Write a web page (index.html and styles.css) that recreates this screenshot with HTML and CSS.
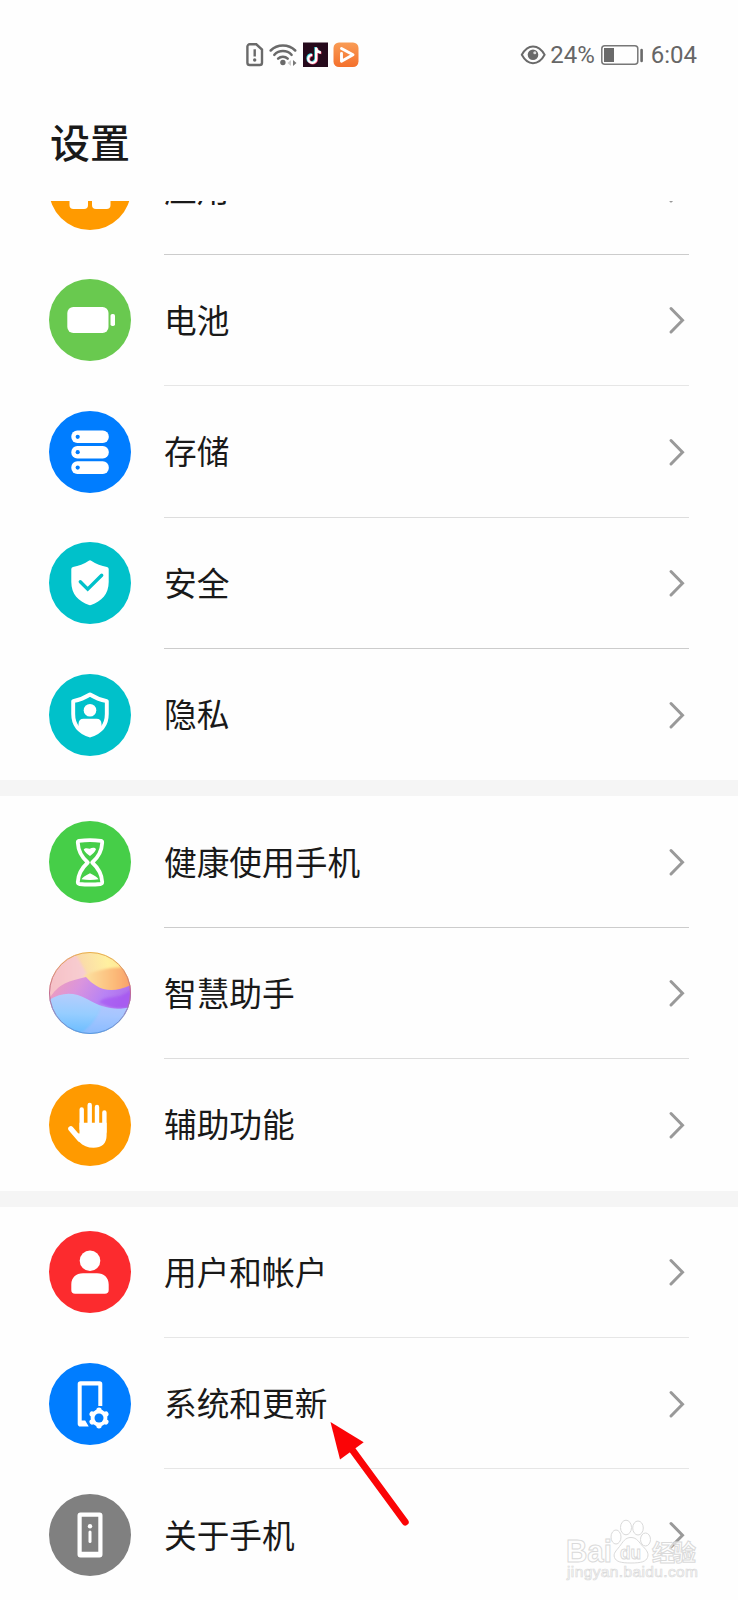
FILE: index.html
```html
<!DOCTYPE html>
<html lang="zh-CN">
<head>
<meta charset="utf-8">
<title>设置</title>
<link rel="stylesheet" href="styles.css">
</head>
<body>
<svg class="defs" width="0" height="0">
  <symbol id="chev" viewBox="0 0 18 30"><path d="M4 3.500 15.500 15.200 4 27" fill="none" stroke="#999" stroke-width="3" stroke-linecap="round"/></symbol>
</svg>
<div class="screen">
  <header class="status">
    <div class="status-left">
      <svg width="20" height="26" viewBox="0 0 20 26"><path d="M4.7 2.300h6.600l5.700 5.200v13.200a2.300 2.300 0 0 1-2.300 2.300H4.700a2.300 2.300 0 0 1-2.300-2.300V4.600a2.300 2.300 0 0 1 2.300-2.300z" fill="none" stroke="#6a6a6a" stroke-width="2.400"/><path d="M9.700 7.300v7.200" stroke="#6a6a6a" stroke-width="2.400"/><circle cx="9.700" cy="18" r="1.700" fill="#6a6a6a"/></svg>
      <svg width="30" height="26" viewBox="0 0 30 26"><g fill="none" stroke="#6a6a6a" stroke-width="2.500" stroke-linecap="round"><path d="M1.700 8.500a17.500 17.500 0 0 1 24.500 0"/><path d="M5.300 12.800a12 12 0 0 1 17.300 0"/><path d="M9.100 16.700a6.700 6.700 0 0 1 9.600 0"/></g><circle cx="13.900" cy="20.500" r="2.700" fill="#6a6a6a"/><path d="M22 18v6l-3.500-3z" fill="#ccc"/><path d="M24 18v6l3.500-3z" fill="#777"/></svg>
      <svg width="25" height="26" viewBox="0 0 25 26"><path fill="#260a1c" d="M0 .500h25v24.500H0z"/><g fill="none" stroke-width="2.600"><path d="M12.600 5v11a4 4 0 1 1-4-3.700M12.600 5.500c.5 3 2 4.300 4.700 4.500" stroke="#35d8dd"/><path d="M13.800 6v11a4 4 0 1 1-4-3.700M13.800 6.500c.5 3 2 4.300 4.700 4.500" stroke="#e8416b"/><path d="M13.200 5.500v11a4 4 0 1 1-4-3.700M13.200 6c.5 3 2 4.300 4.700 4.500" stroke="#fff" stroke-width="2.300"/></g></svg>
      <svg width="26" height="26" viewBox="0 0 26 26"><defs><linearGradient id="og" x2="0" y2="1"><stop stop-color="#f99c55"/><stop offset="1" stop-color="#f4702c"/></linearGradient></defs><rect x=".5" y=".5" width="25" height="24.500" rx="5.500" fill="url(#og)"/><path d="M8.500 6.500 20 12.700 8.500 19.200V11.500" fill="none" stroke="#fff" stroke-width="2.900" stroke-linejoin="round" stroke-linecap="round"/></svg>
    </div>
    <div class="status-right">
      <svg width="26" height="22" viewBox="0 0 26 22"><path d="M1.800 10.800C4.900 5 8.800 2.400 13 2.400S21.500 5 24.600 10.800C21.500 16.600 17.500 19.200 13 19.200S4.900 16.600 1.800 10.800z" fill="none" stroke="#6a6a6a" stroke-width="2"/><circle cx="13" cy="10.800" r="5.300" fill="#6a6a6a"/><circle cx="14.800" cy="8.700" r="1.500" fill="#ddd"/></svg>
      <span class="pct">24%</span>
      <svg width="43" height="20" viewBox="0 0 43 20"><rect x=".8" y=".8" width="36" height="18.400" rx="3" fill="none" stroke="#777" stroke-width="1.500"/><path fill="#6a6a6a" d="M3 3h10v14H3z"/><path d="M40.600 5v11" stroke="#6a6a6a" stroke-width="2.600" stroke-linecap="round"/></svg>
      <span class="time">6:04</span>
    </div>
  </header>
  <h1 class="title">设置</h1>
  <main class="viewport">
    <section class="group first">
      <div class="row"><svg class="icon" viewBox="0 0 82 82"><circle cx="41" cy="41" r="41" fill="#ff9a00"/><g fill="#fff"><rect x="20" y="20" width="19" height="19" rx="4"/><rect x="43" y="20" width="19" height="19" rx="4"/><rect x="20.500" y="43" width="18.500" height="18" rx="4"/><rect x="43" y="43" width="18.500" height="18" rx="4"/></g></svg><div class="cell line-dark"><span>应用</span><svg class="chev"><use href="#chev"/></svg></div></div>
      <div class="row"><svg class="icon" viewBox="0 0 82 82"><circle cx="41" cy="41" r="41" fill="#69c94f"/><rect x="18.300" y="28" width="41.200" height="26" rx="6" fill="#fff"/><rect x="61.500" y="35" width="4.500" height="12" rx="1.800" fill="#fff"/></svg><div class="cell"><span>电池</span><svg class="chev"><use href="#chev"/></svg></div></div>
      <div class="row"><svg class="icon" viewBox="0 0 82 82"><circle cx="41" cy="41" r="41" fill="#007dff"/><g fill="#fff"><rect x="22.300" y="19.500" width="37.500" height="12.600" rx="6"/><rect x="22.300" y="34.900" width="37.500" height="12.600" rx="6"/><rect x="22.300" y="50.300" width="37.500" height="12.600" rx="6"/></g><g fill="#007dff"><circle cx="28.700" cy="25.800" r="2.100"/><circle cx="28.700" cy="41.200" r="2.100"/><circle cx="28.700" cy="56.600" r="2.100"/></g></svg><div class="cell line-mid"><span>存储</span><svg class="chev"><use href="#chev"/></svg></div></div>
      <div class="row"><svg class="icon" viewBox="0 0 82 82"><circle cx="41" cy="41" r="41" fill="#00c1ca"/><path d="M39.800 18.700q1.200-.7 2.400 0C47 21.800 52.500 24 58 25q1.700.4 1.700 2V40c0 12-7.200 19.500-17.700 23q-1 .3-2 0C29.500 59.500 22.300 52 22.300 40V27q0-1.600 1.700-2C29.500 24 35 21.800 39.800 18.700z" fill="#fff"/><path d="m31.300 39.800 7.400 7.400 14-14" fill="none" stroke="#00c1ca" stroke-width="3.400" stroke-linecap="round"/></svg><div class="cell line-dark"><span>安全</span><svg class="chev"><use href="#chev"/></svg></div></div>
      <div class="row"><svg class="icon" viewBox="0 0 82 82"><circle cx="41" cy="41" r="41" fill="#00c1ca"/><path d="M41 20.500c5 3.200 10 5.200 16.800 6.600V40c0 11-6 18-16.800 21.500C30.200 58 24.200 51 24.200 40V27.100C31 25.700 36 23.700 41 20.500z" fill="none" stroke="#fff" stroke-width="3.900" stroke-linejoin="round"/><circle cx="41" cy="36.300" r="6.300" fill="#fff"/><path d="M29.500 54v-4c0-3.500 2-5.300 5-5.300h13c3 0 5 1.800 5 5.300v4c-2.500 4-7 6.500-11.500 8-4.500-1.500-9-4-11.500-8z" fill="#fff"/></svg><div class="cell last"><span>隐私</span><svg class="chev"><use href="#chev"/></svg></div></div>
    </section>
    <section class="group">
      <div class="row"><svg class="icon" viewBox="0 0 82 82"><circle cx="41" cy="41" r="41" fill="#46ce48"/><path d="M30 19.900Q41 18.500 52 19.900q1.300.3 1.200 1.700C52.800 30 49 36.500 43.200 41.500c6 5.500 9.600 11 10 19.500.1 1.400-.4 1.800-1.700 2-7 .7-14 .7-21 0-1.300-.2-1.800-.6-1.700-2C29.200 52.500 32.800 47 38.800 41.500 33 36.500 29.200 30 28.800 21.600q-.1-1.400 1.200-1.700z" fill="none" stroke="#fff" stroke-width="3.800" stroke-linejoin="round"/><path d="M34.700 28.500c1-1.500 3.500-1.500 6-.7 2.500-1.400 5.300-1.500 6.300.5-1 2.800-3.500 5-6 6.600-2.800-1.700-5.300-3.800-6.300-6.400zM32.500 58.300q1.200-2.300 8.500-6 7.300 3.700 8.500 6-8.500 1.200-17 0z" fill="#fff"/></svg><div class="cell line-dark"><span>健康使用手机</span><svg class="chev"><use href="#chev"/></svg></div></div>
      <div class="row"><svg class="icon" viewBox="0 0 82 82">
        <defs>
          <clipPath id="orb"><circle cx="41" cy="41" r="41"/></clipPath>
          <linearGradient id="base" x1="0" x2="1" y1=".2" y2="0"><stop stop-color="#f6c0b0"/><stop offset=".45" stop-color="#fbdfa8"/><stop offset=".7" stop-color="#fff0a0"/><stop offset="1" stop-color="#ffe28a"/></linearGradient>
          <linearGradient id="pinkg" x2="1"><stop stop-color="#f6bfc6"/><stop offset="1" stop-color="#f8cfd2"/></linearGradient>
          <linearGradient id="orangeg" x2="1"><stop stop-color="#fde2a0"/><stop offset=".6" stop-color="#fcba79"/><stop offset="1" stop-color="#f79a64"/></linearGradient>
          <linearGradient id="violetg" x2="1" y2=".3"><stop stop-color="#f3a0b2"/><stop offset=".4" stop-color="#da94dd"/><stop offset=".75" stop-color="#b883f4"/><stop offset="1" stop-color="#b070ed"/></linearGradient>
          <linearGradient id="blueg" x1=".4" x2=".3" y2="1"><stop stop-color="#b6cdfc"/><stop offset=".5" stop-color="#96cdff"/><stop offset="1" stop-color="#69bcff"/></linearGradient>
          <linearGradient id="rim" x2="0" y2="1"><stop stop-color="#e8ae4e"/><stop offset=".5" stop-color="#c16a91"/><stop offset="1" stop-color="#5a98df"/></linearGradient>
          <filter id="soft"><feGaussianBlur stdDeviation="1.200"/></filter>
        </defs>
        <g clip-path="url(#orb)"><path fill="url(#base)" d="M0 0h82v82H0z"/><g filter="url(#soft)"><path fill="url(#pinkg)" d="M-4 2h30c6 8 9 15 13 22-5 9-12 9-17 8-8 0-14 9-26 19z"/><path fill="url(#orangeg)" d="M35 23C52 18 60 14 86 16v34H39z"/></g><path fill="url(#violetg)" d="M0 47C10 31 20 29 37 25c9 10 22 19 45 8v29H0z"/><path fill="#a04af4" opacity=".5" filter="url(#soft)" d="M50 50c9-8 20-1 34-14v21c-12 0-23 0-34-7z"/><path fill="url(#blueg)" d="M0 48c13-8 25-8 38-1 16 9 28 12 44 8v27H0z"/><path fill="#c4baff" opacity=".35" filter="url(#soft)" d="M53 53c9 4 17 4 29 2v27H31c10-8 18-15 22-29z"/></g><circle cx="41" cy="41" r="40.500" fill="none" stroke="url(#rim)" stroke-width="1"/></svg><div class="cell line-mid"><span>智慧助手</span><svg class="chev"><use href="#chev"/></svg></div></div>
      <div class="row"><svg class="icon" viewBox="0 0 82 82"><circle cx="41" cy="41" r="41" fill="#ff9a00"/><g stroke="#fff" stroke-width="4.400" stroke-linecap="round" fill="none"><path d="M32.700 25.500V45M40.700 21v24M48 23v22M55.400 28.500V48"/><path d="m21.800 44.700 9 10.500" stroke-width="5.200"/></g><path d="M30.500 38.800H57.600V51.500c0 8-5 12.300-13 12.300-6 0-10.500-2-14.500-6l-6-8.300h6.400z" fill="#fff"/></svg><div class="cell last"><span>辅助功能</span><svg class="chev"><use href="#chev"/></svg></div></div>
    </section>
    <section class="group">
      <div class="row"><svg class="icon" viewBox="0 0 82 82"><circle cx="41" cy="41" r="41" fill="#fc2b2e"/><circle cx="41" cy="29.800" r="10.300" fill="#fff"/><path d="M22.300 53.500c0-7 4.700-11.300 11.700-11.300h14c7 0 11.700 4.300 11.700 11.300v5.500c0 2.500-1.300 3.800-3.800 3.800H26.100c-2.500 0-3.800-1.300-3.800-3.800z" fill="#fff"/></svg><div class="cell"><span>用户和帐户</span><svg class="chev"><use href="#chev"/></svg></div></div>
      <div class="row"><svg class="icon" viewBox="0 0 82 82"><circle cx="41" cy="41" r="41" fill="#007dff"/><path fill="#fff" fill-rule="evenodd" d="M31.500 18.300h19a2.800 2.800 0 0 1 2.800 2.800v22h-4V22.500H32.700V57.500h3.500l3.500 6.100h-8.200a2.800 2.800 0 0 1-2.800-2.800V21.100a2.800 2.800 0 0 1 2.800-2.800z"/><circle cx="50" cy="55" r="8.400" fill="#fff"/><path d="M50 47.200v15.600M43.200 51.100l13.600 7.800M43.200 58.900l13.600-7.800" stroke="#fff" stroke-width="5.400" stroke-linecap="round"/><circle cx="50" cy="55" r="4.500" fill="#007dff"/></svg><div class="cell"><span>系统和更新</span><svg class="chev"><use href="#chev"/></svg></div></div>
      <div class="row"><svg class="icon" viewBox="0 0 82 82"><circle cx="41" cy="41" r="41" fill="#808080"/><path fill="#fff" fill-rule="evenodd" d="M31.500 18.500h19a3 3 0 0 1 3 3v39a3 3 0 0 1-3 3h-19a3 3 0 0 1-3-3v-39a3 3 0 0 1 3-3zm1.200 4.200v35h16.600v-35z"/><circle cx="41" cy="32.300" r="2.200" fill="#fff"/><path d="M41 38v9.500" stroke="#fff" stroke-width="3" stroke-linecap="round"/></svg><div class="cell last"><span>关于手机</span><svg class="chev"><use href="#chev"/></svg></div></div>
    </section>
  </main>
  <svg class="arrow" width="90" height="110" viewBox="0 0 90 110"><path d="M22 29.500 75.200 102" stroke="#fb0406" stroke-width="7" stroke-linecap="round"/><path d="M.500 2 33.700 22.300 10 39.500z" fill="#fb0406"/></svg>
  <svg class="watermark" width="150" height="74" viewBox="0 0 150 74">
    <g fill="#fff" fill-opacity=".6" stroke="#dadada" stroke-width="1">
      <text class="wm-latin" x="4" y="52" font-size="31" textLength="46" lengthAdjust="spacingAndGlyphs">Bai</text>
      <ellipse cx="54" cy="27" rx="5" ry="7"/><ellipse cx="64" cy="17.500" rx="5.500" ry="7.300"/><ellipse cx="76" cy="18" rx="5.300" ry="7"/><ellipse cx="83.500" cy="29.500" rx="5" ry="6.500"/>
      <path d="M69 27.500c6 0 8 5 12 9s6 7 4.500 11-6 5.500-16.500 5.500-15-1.500-16.500-5.500S54 41 57.500 36.500 63 27.500 69 27.500z"/>
      <text class="wm-latin" x="58" y="49" font-size="19" textLength="21" lengthAdjust="spacingAndGlyphs">du</text>
      <text class="wm-cjk" x="90" y="50.500" font-size="23" textLength="44">经验</text>
      <text class="wm-url" x="5" y="67" font-size="15.500" textLength="131">jingyan.baidu.com</text>
    </g>
  </svg>
</div>
</body>
</html>
```
FILE: styles.css
```css
* { box-sizing: border-box; }
body { margin: 0; background: #fefefe; overflow: hidden; font-family: "Noto Sans CJK SC", sans-serif; color: #191919; }
svg { display: block; flex: none; }
.defs { position: absolute; }
.screen { position: relative; width: 738px; height: 1600px; overflow: hidden; display: flex; flex-direction: column; }
.status { height: 109px; padding: 0 41px 0 245px; display: flex; justify-content: space-between; align-items: center; flex: none; font-family: Roboto, sans-serif; font-size: 24px; color: #666; }
.status-left { display: flex; gap: 4px; align-items: center; }
.status-left svg:last-child { margin-left: 1px; }
.status-right { display: flex; align-items: center; }
.pct { margin-left: 4px; margin-right: 6px; }
.time { margin-left: 7px; }
.title { margin: 0; height: 92px; padding: 0 0 0 50px; font-size: 40px; font-weight: 500; line-height: 64px; flex: none; }
.viewport { flex: none; height: 1399px; overflow: hidden; }
.group + .group { border-top: 16px solid #f5f5f5; }
.first { margin-top: -77.600px; }
.row { height: 131.400px; padding: 0 49px; display: flex; align-items: center; gap: 33px; }
.icon { width: 82px; height: 82px; }
.cell { flex: 1; height: 100%; display: flex; align-items: center; justify-content: space-between; border-bottom: 1px solid #e6e6e6; font-size: 32.700px; line-height: 40px; padding: 1px 4px 0 0; }
.cell span { margin-top: -3px; }
.line-dark { border-bottom-color: #ccc; }
.line-mid { border-bottom-color: #ddd; }
.last { border-bottom-color: transparent; }
.chev { width: 18px; height: 30px; }
.arrow { position: absolute; left: 330px; top: 1420px; }
.watermark { position: absolute; left: 562px; top: 1510px; }
.wm-latin { font-family: "Liberation Sans", sans-serif; font-weight: 700; }
.wm-cjk { font-family: "Noto Sans CJK SC", sans-serif; font-weight: 700; }
.wm-url { font-family: "Liberation Sans", sans-serif; stroke-width: .7px; }
```
